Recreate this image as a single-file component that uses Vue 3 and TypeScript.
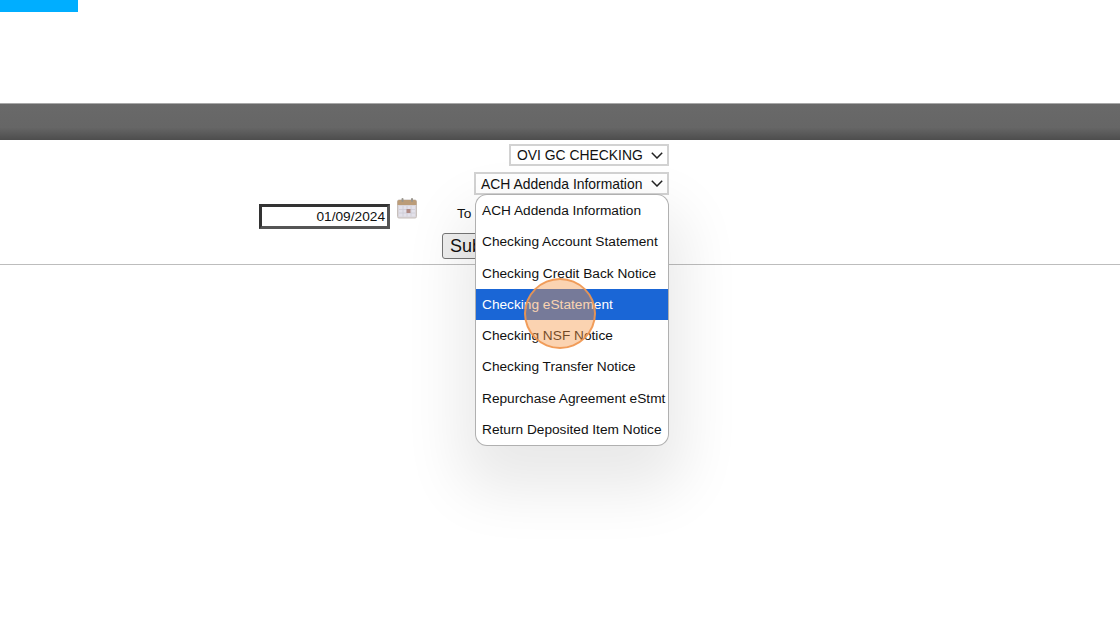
<script setup lang="ts">
const options: string[] = [
  'ACH Addenda Information',
  'Checking Account Statement',
  'Checking Credit Back Notice',
  'Checking eStatement',
  'Checking NSF Notice',
  'Checking Transfer Notice',
  'Repurchase Agreement eStmt',
  'Return Deposited Item Notice',
]
const selected = 'Checking eStatement'
</script>

<template>
  <div class="page">
    <header class="top">
      <div class="logo"></div>
    </header>
    <div class="band"></div>
    <form class="form" @submit.prevent>
      <div class="select-row first">
        <div class="select account">
          <span>OVI GC CHECKING</span>
          <svg class="chevron" width="12" height="7" viewBox="0 0 12 7"><path d="M.8.8L6 6l5.200-5.200" fill="none" stroke="#222" stroke-width="1.500"/></svg>
        </div>
      </div>
      <div class="select-row second">
        <div class="select doc">
          <span>ACH Addenda Information</span>
          <svg class="chevron" width="12" height="7" viewBox="0 0 12 7"><path d="M.8.8L6 6l5.200-5.200" fill="none" stroke="#222" stroke-width="1.500"/></svg>
        </div>
      </div>
      <div class="date-row">
        <div class="date-input">01/09/2024</div>
        <svg class="cal" width="22" height="22" viewBox="0 0 22 22">
          <rect x="1.500" y="3" width="19" height="18" rx="1.500" fill="#d9d5da" stroke="#c8c0bc"/>
          <path d="M1.500 4.500q0-1.500 1.500-1.500h16q1.500 0 1.500 1.500V8h-19z" fill="#bb9c78"/>
          <rect x="3" y="9" width="16" height="10.500" fill="#e3e1ea"/>
          <path d="M3 12.500h16M3 16h16M7 9v10.500M11 9v10.500M15 9v10.500" stroke="#cdcbd6" stroke-width=".8"/>
          <rect x="10.500" y="12" width="4" height="4" fill="#b08a84"/>
          <rect x="5.500" y="1" width="2" height="4" rx="1" fill="#9a958c"/>
          <rect x="15" y="1" width="2" height="4" rx="1" fill="#9a958c"/>
        </svg>
        <span class="to">To</span>
      </div>
      <div class="submit-row">
        <button type="button" class="submit">Submit</button>
      </div>
    </form>
    <hr class="rule" />

    <ul class="menu">
      <li v-for="opt in options" :key="opt" :class="{ active: opt === selected }">{{ opt }}</li>
    </ul>
    <div class="click"></div>
  </div>
</template>

<style>
html, body {
  margin: 0;
  background: #fff;
}
</style>

<style scoped>
.page {
  position: relative;
  width: 1120px;
  height: 626px;
  overflow: hidden;
  background: #fff;
  color: #111;
  font-family: "Liberation Sans", Arial, sans-serif;
}
.top {
  height: 103px;
}
.logo {
  width: 78px;
  height: 12px;
  background: #00aeff;
}
.band {
  height: 37px;
  box-sizing: border-box;
  border-top: 1px solid #a8a8a8;
  background: linear-gradient(#696969 0%, #666 65%, #4d4d4d 100%);
}
.form {
  height: 124px;
  box-sizing: border-box;
  padding-top: 4px;
}
.select-row {
  display: flex;
  justify-content: flex-end;
  padding-right: 451px;
}
.second {
  margin-top: 6px;
}
.select {
  display: flex;
  align-items: center;
  justify-content: space-between;
  box-sizing: border-box;
  height: 23px;
  border: 2px solid #d2d2d2;
  padding: 0 4px 0 5px;
  font-size: 13.900px;
  white-space: nowrap;
  background: #fff;
}
.account {
  width: 160px;
  height: 22px;
  padding-left: 6px;
}
.doc {
  width: 195px;
}
.date-row {
  display: flex;
  align-items: flex-start;
  margin-top: 3px;
  padding-left: 259px;
}
.date-input {
  box-sizing: border-box;
  width: 131px;
  height: 25px;
  margin-top: 6px;
  border: 3px solid #333;
  border-bottom-color: #555;
  border-right-color: #555;
  padding: 1px 2px 0 0;
  font-size: 13.700px;
  line-height: 18px;
  text-align: right;
  background: #fff;
}
.cal {
  margin-left: 6px;
  margin-top: -1px;
}
.to {
  margin-left: 39px;
  margin-top: 8px;
  font-size: 13.700px;
}
.submit-row {
  margin-top: 4px;
  padding-left: 442px;
}
.submit {
  box-sizing: border-box;
  width: 100px;
  height: 26px;
  padding: 0 0 0 7px;
  border: 1px solid #767676;
  border-radius: 3px;
  background: #efefef;
  color: #111;
  font-family: inherit;
  font-size: 18px;
  text-align: left;
}
.rule {
  margin: 0;
  border: 0;
  height: 1px;
  background: #bdbdbd;
}
.menu {
  position: absolute;
  left: 476px;
  top: 195px;
  box-sizing: border-box;
  width: 192px;
  height: 250px;
  margin: 0;
  padding: 0;
  list-style: none;
  overflow: hidden;
  background: #fff;
  border-radius: 11px;
  box-shadow: 0 0 0 1px #b0b0b0, 0 30px 60px 15px rgba(0, 0, 0, 0.09);
}
.menu li {
  height: 31.300px;
  padding-left: 6px;
  font-size: 13.700px;
  line-height: 32px;
  white-space: nowrap;
}
.menu li.active {
  background: #1a66d6;
  color: #fff;
}
.click {
  position: absolute;
  left: 524px;
  top: 278px;
  width: 72px;
  height: 71px;
  box-sizing: border-box;
  border-radius: 50%;
  border: 2px solid rgba(240, 150, 80, 0.9);
  background: rgba(245, 150, 70, 0.42);
}
</style>
